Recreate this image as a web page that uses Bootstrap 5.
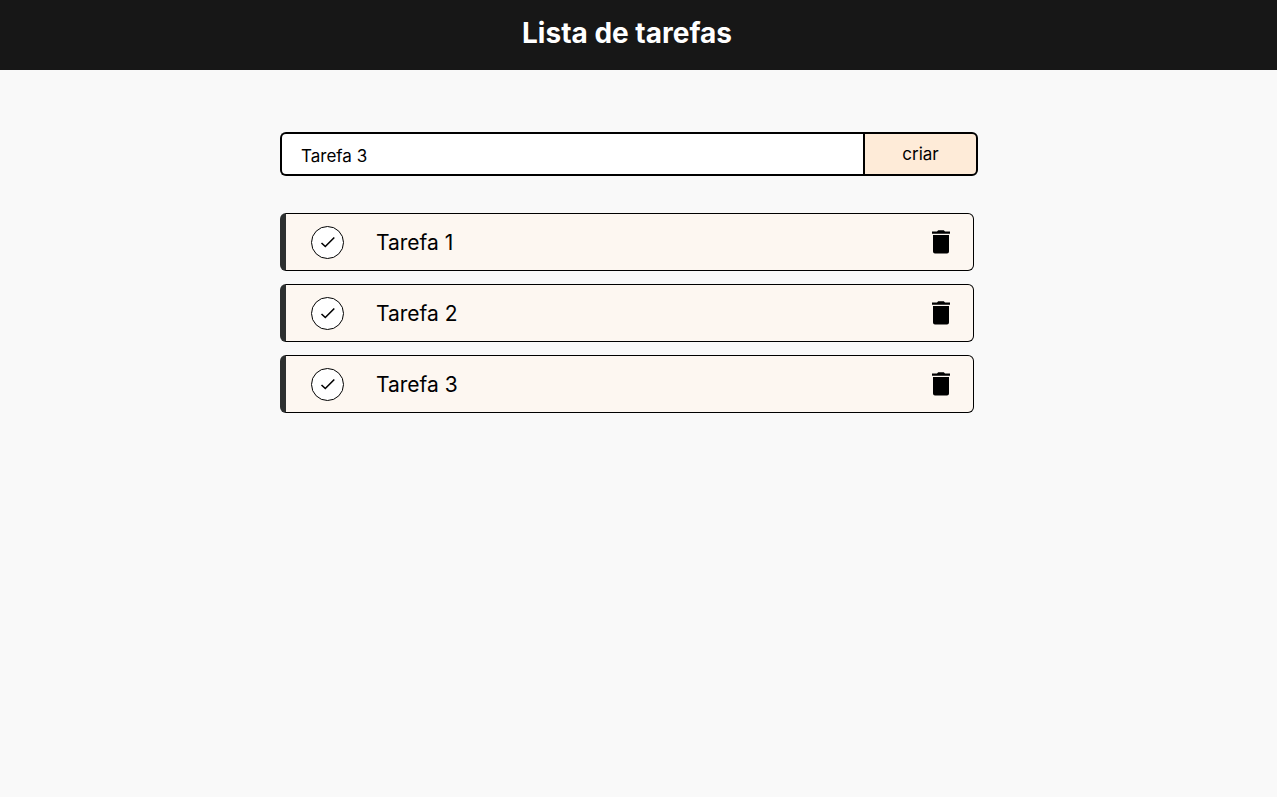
<!DOCTYPE html>
<html lang="pt-BR">
<head>
<meta charset="utf-8">
<meta name="viewport" content="width=device-width, initial-scale=1">
<title>Lista de tarefas</title>
<link href="https://cdn.jsdelivr.net/npm/bootstrap@5.3.0/dist/css/bootstrap.min.css" rel="stylesheet">
<style>
  body { background: #f9f9f9; color: #000; font-family: Inter, "Open Sans", sans-serif; }
  .topbar { background: #171717; height: 70px; padding: 0 23px 4px 0; }
  .topbar h1 { font-size: 28px; line-height: 40px; font-weight: 700; }
  .page-main { padding: 62px 19px 32px 0; }
  .todo { max-width: 698px; }
  .new-task { height: 44px; margin-bottom: 37px; }
  .new-task .form-control { border: 2px solid #000; border-right: 0; border-radius: 6px 0 0 6px; padding: 5px 19px 0; font-size: 17px; color: #000; background: #fff; }
  .new-task .btn { --bs-btn-bg: #feebd8; --bs-btn-hover-bg: #fbdcbd; --bs-btn-color: #000; width: 116px; margin-left: 0; border: 2px solid #000; border-radius: 0 6px 6px 0; font-size: 17px; padding: 2px 0 0; }
  .new-task.input-group > .btn:not(:first-child) { width: 115px; margin-left: 0; }
  .task-list { gap: 13px; }
  .task { height: 58px; background: #fdf7f1; border: 1px solid #000; border-left: 6px solid #2d3030; border-radius: 6px; padding: 0 22px 0 25px; }
  .task-name { font-size: 21px; line-height: 30px; margin-left: 32px; padding-top: 1px; }
  .check-btn { width: 33px; height: 33px; border: 1px solid #000; background: #fff; }
</style>
</head>
<body>
<header class="topbar d-flex align-items-center justify-content-center">
  <h1 class="text-white m-0">Lista de tarefas</h1>
</header>
<main class="page-main">
  <div class="todo mx-auto">
    <form class="new-task input-group" onsubmit="return false">
      <input type="text" class="form-control shadow-none" aria-label="Nova tarefa" value="Tarefa 3">
      <button type="submit" class="btn">criar</button>
    </form>
    <svg class="d-none">
      <symbol id="check" viewBox="0 0 16 16"><path d="M1.500 9 5.300 12.500 14.300 3.500" fill="none" stroke="#000" stroke-width="1.600"/></symbol>
      <symbol id="trash" viewBox="0 0 18 24"><path d="M0 1.500h5L6.200.300h5.600L13 1.500h5v2.200H0zM1 5h16v16.500a2 2 0 0 1-2 2H3a2 2 0 0 1-2-2z"/></symbol>
    </svg>
    <ul class="task-list list-unstyled d-flex flex-column mb-0 me-1">
      <li class="task d-flex align-items-center">
        <button type="button" class="check-btn rounded-circle p-0 d-flex align-items-center justify-content-center" aria-label="Concluir Tarefa 1"><svg width="16" height="16"><use href="#check"/></svg></button>
        <span class="task-name flex-grow-1">Tarefa 1</span>
        <button type="button" class="btn border-0 p-0 d-flex" aria-label="Excluir Tarefa 1"><svg width="20" height="24"><use href="#trash"/></svg></button>
      </li>
      <li class="task d-flex align-items-center">
        <button type="button" class="check-btn rounded-circle p-0 d-flex align-items-center justify-content-center" aria-label="Concluir Tarefa 2"><svg width="16" height="16"><use href="#check"/></svg></button>
        <span class="task-name flex-grow-1">Tarefa 2</span>
        <button type="button" class="btn border-0 p-0 d-flex" aria-label="Excluir Tarefa 2"><svg width="20" height="24"><use href="#trash"/></svg></button>
      </li>
      <li class="task d-flex align-items-center">
        <button type="button" class="check-btn rounded-circle p-0 d-flex align-items-center justify-content-center" aria-label="Concluir Tarefa 3"><svg width="16" height="16"><use href="#check"/></svg></button>
        <span class="task-name flex-grow-1">Tarefa 3</span>
        <button type="button" class="btn border-0 p-0 d-flex" aria-label="Excluir Tarefa 3"><svg width="20" height="24"><use href="#trash"/></svg></button>
      </li>
    </ul>
  </div>
</main>
<script src="https://cdn.jsdelivr.net/npm/bootstrap@5.3.0/dist/js/bootstrap.bundle.min.js"></script>
</body>
</html>
